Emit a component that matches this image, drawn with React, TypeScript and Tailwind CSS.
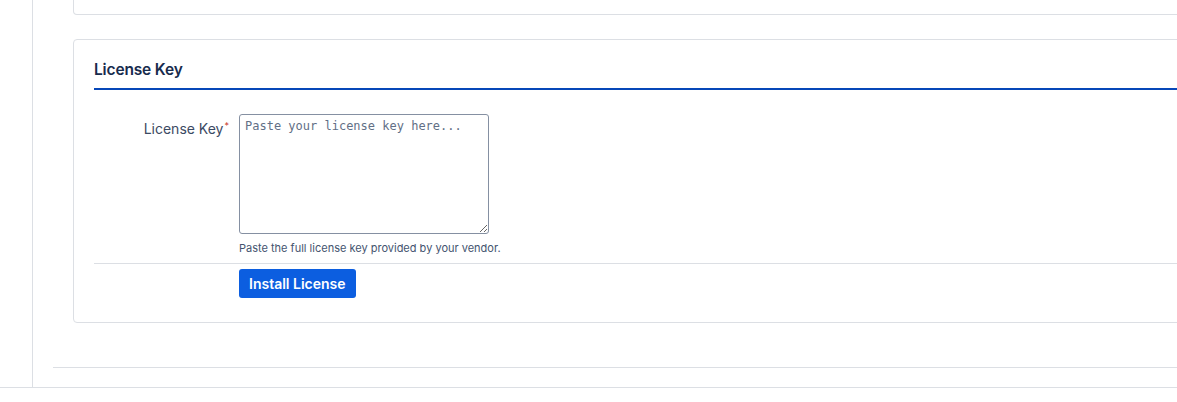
import React, { useState } from 'react';

const App: React.FC = () => {
  const [licenseKey, setLicenseKey] = useState('');

  return (
    <div className="h-[402px] w-full overflow-hidden bg-white font-['Inter','Noto_Sans',sans-serif]">
      <div className="flex h-[388px] border-b border-[#dcdfe4]">
        {/* left rail */}
        <div className="w-[33px] shrink-0 border-r border-[#dcdfe4]" />

        <div className="min-w-0 flex-1 pl-5">
          <div className="h-[368px] border-b border-[#dcdfe4] pl-5">
            {/* previous card, only its bottom shows */}
            <div className="-mr-8 h-[15px] rounded-b-[4px] border-x border-b border-[#dcdfe4]" />

            <div className="-mr-8 mt-6 rounded-[4px] border border-[#dcdfe4] px-5 pb-6 pt-[18px]">
              <h2 className="border-b-2 border-[#0747b8] pb-[6px] text-[15.5px] font-semibold leading-6 tracking-[-0.01em] text-[#172b4d]">
                License Key
              </h2>

              <div className="mt-6 flex">
                <label
                  htmlFor="license-key"
                  className="w-[135px] shrink-0 pt-[5px] text-right text-[14px] leading-5 text-[#3b4a63]"
                >
                  License Key<span className="relative -top-[5px] ml-[1px] text-[9px] text-[#c9372c]">*</span>
                </label>
                <div className="ml-[10px]">
                  <textarea
                    id="license-key"
                    value={licenseKey}
                    onChange={(e) => setLicenseKey(e.target.value)}
                    placeholder="Paste your license key here..."
                    className="block h-[120px] w-[250px] rounded-[3px] border border-[#8590a2] px-[5px] py-[3px] font-['DejaVu_Sans_Mono',monospace] text-[12px] leading-[16px] text-[#172b4d] placeholder:text-[#626f86] focus:outline-none"
                  />
                  <p className="mt-[6px] text-[11px] leading-4 text-[#44546f]">
                    Paste the full license key provided by your vendor.
                  </p>
                </div>
              </div>

              <div className="mt-[7px] border-t border-[#dcdfe4] pl-[145px] pt-[5px]">
                <button className="h-[29px] rounded-[3px] bg-[#0c5ee0] px-[10px] text-[14px] font-semibold leading-5 text-white">
                  Install License
                </button>
              </div>
            </div>
          </div>
        </div>
      </div>
    </div>
  );
};

export default App;
